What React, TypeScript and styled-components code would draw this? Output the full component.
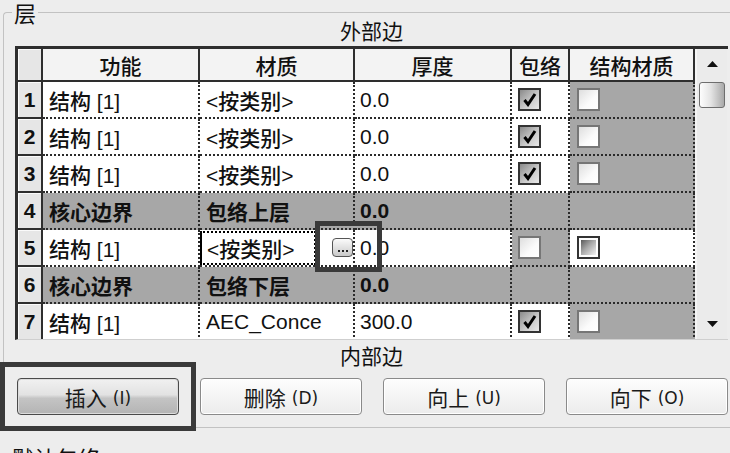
import styled, { createGlobalStyle } from "styled-components";

type Check = "checked" | "empty" | "mixed" | "none";

interface LayerRow {
  n: number;
  fn: string;
  mat: string;
  th: string;
  wrap: Check;
  struct: Check;
  core?: boolean;
  editing?: boolean;
}

const rows: LayerRow[] = [
  { n: 1, fn: "结构 [1]", mat: "<按类别>", th: "0.0", wrap: "checked", struct: "empty" },
  { n: 2, fn: "结构 [1]", mat: "<按类别>", th: "0.0", wrap: "checked", struct: "empty" },
  { n: 3, fn: "结构 [1]", mat: "<按类别>", th: "0.0", wrap: "checked", struct: "empty" },
  { n: 4, fn: "核心边界", mat: "包络上层", th: "0.0", wrap: "none", struct: "none", core: true },
  { n: 5, fn: "结构 [1]", mat: "<按类别>", th: "0.0", wrap: "empty", struct: "mixed", editing: true },
  { n: 6, fn: "核心边界", mat: "包络下层", th: "0.0", wrap: "none", struct: "none", core: true },
  { n: 7, fn: "结构 [1]", mat: "AEC_Conce", th: "300.0", wrap: "checked", struct: "empty" },
];

const headers = ["功能", "材质", "厚度", "包络", "结构材质"];
const buttons = [
  { label: "插入", key: "(I)", primary: true },
  { label: "删除", key: "(D)" },
  { label: "向上", key: "(U)" },
  { label: "向下", key: "(O)" },
];

const GlobalStyle = createGlobalStyle`
  html, body {
    margin: 0;
    padding: 0;
    background: #ededed;
  }
  * {
    box-sizing: border-box;
  }
`;

const Page = styled.div`
  position: relative;
  width: 730px;
  height: 453px;
  overflow: hidden;
  background: #ededed;
  color: #111;
  font-family: "Liberation Sans", "Noto Sans CJK SC", sans-serif;
`;

const Group = styled.fieldset`
  margin: 0 0 0 3px;
  width: 727px;
  padding: 0 3px 12px 11px;
  border: 1px solid #c2c2c2;
  border-right: none;
  border-radius: 4px 0 0 0;
`;

const Legend = styled.legend`
  margin-left: -3px;
  padding: 0 2px;
  font-size: 22px;
  line-height: 24px;
  font-family: "Noto Sans CJK SC", sans-serif;
`;

const SideLabel = styled.div<{ $top: number; $bottom: number }>`
  margin: ${(p) => p.$top}px 0 ${(p) => p.$bottom}px;
  text-align: center;
  font-size: 21px;
  line-height: 22px;
  font-family: "Noto Sans CJK SC", sans-serif;
`;

const TableFrame = styled.div`
  display: flex;
  height: 294px;
  border-top: 3px solid #2e2e2e;
  border-left: 3px solid #2e2e2e;
  border-bottom: 1px solid #cfcfcf;
  overflow: hidden;
`;

const Grid = styled.div`
  display: grid;
  grid-template-columns: 25px 157px 155px 157px 58px 125px;
  grid-template-rows: 33px repeat(7, 37px);
  align-content: start;
`;

const HeadCell = styled.div`
  display: flex;
  align-items: center;
  justify-content: center;
  background: #f3f3f3;
  border-right: 2px solid #2e2e2e;
  border-bottom: 2px solid #2e2e2e;
  font-size: 21px;
  font-weight: 500;
  font-family: "Noto Sans CJK SC", sans-serif;
`;

const RowNum = styled.div`
  display: flex;
  align-items: center;
  justify-content: center;
  background: #e6e6e6;
  border-right: 2px solid #2e2e2e;
  border-bottom: 2px solid #2e2e2e;
  box-shadow: inset 1px 1px 0 #fafafa;
  font-size: 21px;
  font-weight: 700;
  font-family: "Liberation Sans", sans-serif;
`;

const Cell = styled.div<{ $grey?: boolean; $bold?: boolean; $pad?: number }>`
  display: flex;
  align-items: center;
  padding-left: ${(p) => (p.$pad ?? 6)}px;
  background: ${(p) => (p.$grey ? "#a7a7a7" : "#fff")};
  border-right: 2px dotted #2a2a2a;
  border-bottom: 2px dotted #2a2a2a;
  font-size: 21px;
  font-weight: ${(p) => (p.$bold ? 700 : 500)};
  white-space: nowrap;
  overflow: hidden;
`;

const EditBox = styled.div`
  display: flex;
  align-items: center;
  align-self: stretch;
  width: 116px;
  margin-top: 1px;
  padding-left: 5px;
  background: #fff;
  border: 2px dotted #000;
  border-left-style: solid;
`;

const MoreButton = styled.span`
  display: inline-flex;
  align-items: flex-end;
  justify-content: center;
  gap: 2px;
  width: 21px;
  height: 19px;
  margin-left: 16px;
  padding-bottom: 4px;
  border: 1.5px solid #555;
  border-radius: 4px;
  background: linear-gradient(#fbfbfb, #c9c9c9);
`;

const Dot = styled.i`
  width: 2px;
  height: 2px;
  background: #222;
`;

const Box = styled.span<{ $state: Check }>`
  display: inline-flex;
  align-items: center;
  justify-content: center;
  width: 23px;
  height: 23px;
  padding: 2px;
  border: 2px solid ${(p) => (p.$state === "empty" ? "#767676" : "#333")};
  background: ${(p) =>
    p.$state === "checked"
      ? "linear-gradient(135deg, #8a8a8a 0%, #cdcdcd 60%, #e8e8e8 100%)"
      : p.$state === "mixed"
      ? "#fdfdfd"
      : "linear-gradient(135deg, #dedede 0%, #fbfbfb 60%, #fff 100%)"};
`;

const MixedFill = styled.span`
  width: 100%;
  height: 100%;
  background: linear-gradient(135deg, #5a5a5a 0%, #a8a8a8 45%, #f2f2f2 100%);
`;

const ScrollBar = styled.div`
  display: flex;
  flex-direction: column;
  align-items: center;
  width: 32px;
  background: #ebebeb;
  border-left: 2px solid #f5f5f5;
`;

const ArrowButton = styled.div`
  display: flex;
  align-items: center;
  justify-content: center;
  width: 100%;
  height: 30px;
`;

const Thumb = styled.div`
  width: 26px;
  height: 26px;
  margin-top: 3px;
  border: 1px solid #6e6e6e;
  border-radius: 3px;
  background: linear-gradient(90deg, #fdfdfd 0%, #e4e4e4 45%, #a9a9a9 100%);
`;

const Track = styled.div`
  flex: 1;
`;

const ButtonRow = styled.div`
  display: flex;
  gap: 21px;
  margin-top: 12px;
  padding-left: 2px;
`;

const Button = styled.button<{ $primary?: boolean }>`
  display: flex;
  align-items: center;
  justify-content: center;
  gap: 6px;
  width: 162px;
  height: 37px;
  padding: 0;
  border: 1px solid ${(p) => (p.$primary ? "#4a4a4a" : "#8a8a8a")};
  border-radius: 4px;
  background: ${(p) =>
    p.$primary
      ? "linear-gradient(#f1f1f1 0%, #e2e2e2 45%, #c4c4c4 55%, #b4b4b4 100%)"
      : "linear-gradient(#fdfdfd, #ececec)"};
  box-shadow: inset 0 0 0 1px ${(p) => (p.$primary ? "#dcdcdc" : "#fff")};
  color: #1a1a1a;
  font-family: "Noto Sans CJK SC", sans-serif;
  font-size: 21px;
  line-height: 24px;
`;

const KeyHint = styled.span`
  font-family: "DejaVu Sans", sans-serif;
  font-size: 17px;
  line-height: 24px;
  padding-top: 2px;
`;

const BelowLabel = styled.div`
  margin: 17px 0 0 12px;
  font-size: 22px;
  line-height: 24px;
  font-family: "Noto Sans CJK SC", sans-serif;
`;

// dark callout frames drawn over the dialog
const Callout = styled.div<{ $x: number; $y: number; $w: number; $h: number }>`
  position: absolute;
  left: ${(p) => p.$x}px;
  top: ${(p) => p.$y}px;
  width: ${(p) => p.$w}px;
  height: ${(p) => p.$h}px;
  border: 5px solid #3a3a3a;
  pointer-events: none;
`;

function CheckBox({ state }: { state: Check }) {
  if (state === "none") return null;
  return (
    <Box $state={state}>
      {state === "checked" && (
        <svg width="15" height="15" viewBox="0 0 15 15">
          <path d="M2.5 8 L6 12.5 L13 2" fill="none" stroke="#000" strokeWidth="3" />
        </svg>
      )}
      {state === "mixed" && <MixedFill />}
    </Box>
  );
}

function Arrow({ down }: { down?: boolean }) {
  return (
    <svg width="11" height="6" viewBox="0 0 11 6">
      <path d={down ? "M0 0 H11 L5.5 6 Z" : "M0 6 H11 L5.5 0 Z"} fill="#111" />
    </svg>
  );
}

export default function App() {
  return (
    <Page>
      <GlobalStyle />
      <Group>
        <Legend>层</Legend>
        <SideLabel $top={-5} $bottom={5}>外部边</SideLabel>
        <TableFrame>
          <Grid>
            <RowNum />
            {headers.map((h) => (
              <HeadCell key={h}>{h}</HeadCell>
            ))}
            {rows.map((r) => [
              <RowNum key={`n${r.n}`}>{r.n}</RowNum>,
              <Cell key={`f${r.n}`} $grey={r.core} $bold={r.core}>
                {r.fn}
              </Cell>,
              r.editing ? (
                <Cell key={`m${r.n}`} $pad={0}>
                  <EditBox>{r.mat}</EditBox>
                  <MoreButton>
                    <Dot />
                    <Dot />
                    <Dot />
                  </MoreButton>
                </Cell>
              ) : (
                <Cell key={`m${r.n}`} $grey={r.core} $bold={r.core}>
                  {r.mat}
                </Cell>
              ),
              <Cell key={`t${r.n}`} $grey={r.core} $bold={r.core} $pad={5}>
                {r.th}
              </Cell>,
              <Cell key={`w${r.n}`} $grey={r.core || r.editing}>
                <CheckBox state={r.wrap} />
              </Cell>,
              <Cell key={`s${r.n}`} $grey={!r.editing} $pad={7}>
                <CheckBox state={r.struct} />
              </Cell>,
            ])}
          </Grid>
          <ScrollBar>
            <ArrowButton>
              <Arrow />
            </ArrowButton>
            <Thumb />
            <Track />
            <ArrowButton>
              <Arrow down />
            </ArrowButton>
          </ScrollBar>
        </TableFrame>
        <SideLabel $top={4} $bottom={0}>内部边</SideLabel>
        <ButtonRow>
          {buttons.map((b) => (
            <Button key={b.label} $primary={b.primary}>
              {b.label}
              <KeyHint>{b.key}</KeyHint>
            </Button>
          ))}
        </ButtonRow>
      </Group>
      <BelowLabel>默认包络</BelowLabel>
      <Callout $x={315} $y={221} $w={67} $h={51} />
      <Callout $x={0} $y={362} $w={196} $h={69} />
    </Page>
  );
}
